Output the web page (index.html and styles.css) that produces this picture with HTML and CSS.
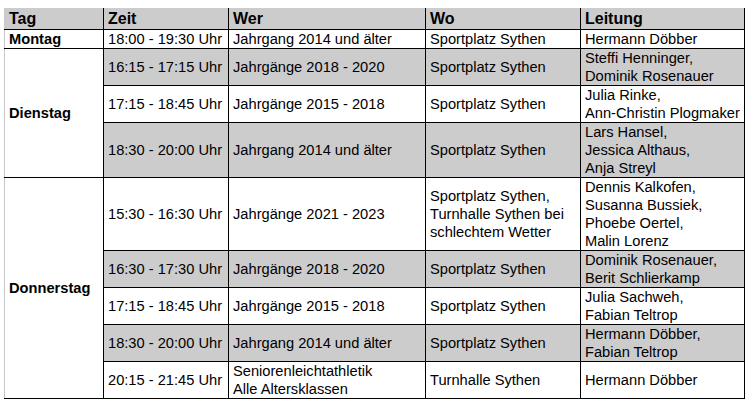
FILE: index.html
```html
<!DOCTYPE html>
<html lang="de">
<head>
<meta charset="utf-8">
<link rel="stylesheet" href="styles.css">
</head>
<body>
<div class="page">
<table class="plan">
<colgroup>
<col class="c-tag"><col class="c-zeit"><col class="c-wer"><col class="c-wo"><col class="c-leit">
</colgroup>
<thead>
<tr class="head"><th>Tag</th><th>Zeit</th><th>Wer</th><th>Wo</th><th>Leitung</th></tr>
</thead>
<tbody>
<tr><td class="day">Montag</td><td>18:00 - 19:30 Uhr</td><td>Jahrgang 2014 und älter</td><td>Sportplatz Sythen</td><td>Hermann Döbber</td></tr>

<tr class="alt"><td class="day" rowspan="3">Dienstag</td><td>16:15 - 17:15 Uhr</td><td>Jahrgänge 2018 - 2020</td><td>Sportplatz Sythen</td><td>Steffi Henninger,<br>Dominik Rosenauer</td></tr>
<tr><td>17:15 - 18:45 Uhr</td><td>Jahrgänge 2015 - 2018</td><td>Sportplatz Sythen</td><td>Julia Rinke,<br>Ann-Christin Plogmaker</td></tr>
<tr class="alt"><td>18:30 - 20:00 Uhr</td><td>Jahrgang 2014 und älter</td><td>Sportplatz Sythen</td><td>Lars Hansel,<br>Jessica Althaus,<br>Anja Streyl</td></tr>

<tr><td class="day" rowspan="5">Donnerstag</td><td>15:30 - 16:30 Uhr</td><td>Jahrgänge 2021 - 2023</td><td>Sportplatz Sythen,<br>Turnhalle Sythen bei<br>schlechtem Wetter</td><td>Dennis Kalkofen,<br>Susanna Bussiek,<br>Phoebe Oertel,<br>Malin Lorenz</td></tr>
<tr class="alt"><td>16:30 - 17:30 Uhr</td><td>Jahrgänge 2018 - 2020</td><td>Sportplatz Sythen</td><td>Dominik Rosenauer,<br>Berit Schlierkamp</td></tr>
<tr><td>17:15 - 18:45 Uhr</td><td>Jahrgänge 2015 - 2018</td><td>Sportplatz Sythen</td><td>Julia Sachweh,<br>Fabian Teltrop</td></tr>
<tr class="alt"><td>18:30 - 20:00 Uhr</td><td>Jahrgang 2014 und älter</td><td>Sportplatz Sythen</td><td>Hermann Döbber,<br>Fabian Teltrop</td></tr>
<tr><td>20:15 - 21:45 Uhr</td><td>Seniorenleichtathletik<br>Alle Altersklassen</td><td>Turnhalle Sythen</td><td>Hermann Döbber</td></tr>
</tbody>
</table>
</div>
</body>
</html>
```

FILE: styles.css
```css
html, body {
  margin: 0;
  padding: 0;
  background: #ffffff;
}
.page {
  padding: 8px 0 0 4px;
}
.plan {
  border-collapse: collapse;
  table-layout: fixed;
  width: 740px;
  font-family: "Liberation Sans", Arial, sans-serif;
  font-size: 14.67px;
  line-height: 18px;
  color: #000;
  border-left: 1px solid #c8c8c8;
  border-top: 1px solid #cccccc;
  border-right: 1px solid #000;
  border-bottom: 1px solid #000;
}
.c-tag { width: 99px; }
.c-zeit { width: 125px; }
.c-wer { width: 197px; }
.c-wo { width: 155px; }
.c-leit { width: 164px; }
.plan th, .plan td {
  border: 1px solid #000;
  padding: 0 4px;
  text-align: left;
  vertical-align: middle;
  white-space: nowrap;
  overflow: hidden;
}
.plan tr > :first-child {
  border-left-color: #c8c8c8;
}
.head th {
  background: #cccccc;
  font-weight: bold;
  font-size: 16px;
  line-height: 20px;
  border-top-color: #cccccc;
}
.alt td {
  background: #cccccc;
}
.plan td.day {
  font-weight: bold;
  background: #ffffff;
}
```
